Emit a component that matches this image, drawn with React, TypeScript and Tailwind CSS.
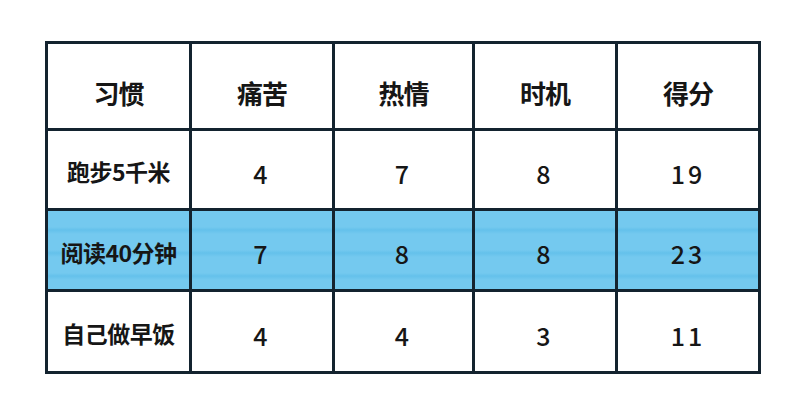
const headers = ['习惯', '痛苦', '热情', '时机', '得分']

const rows: { label: string; values: string[]; highlight?: boolean; height: string }[] = [
  { label: '跑步5千米', values: ['4', '7', '8', '19'], height: 'h-[80px]' },
  { label: '阅读40分钟', values: ['7', '8', '8', '23'], highlight: true, height: 'h-[81px]' },
  { label: '自己做早饭', values: ['4', '4', '3', '11'], height: 'h-[82px]' },
]

const cols = 'grid grid-cols-[144px_143px_140px_143px_143px]'
const cell = 'flex items-center justify-center border-r-[3px] border-b-[3px] border-[#13232f]'

export default function App() {
  return (
    <div className="h-[404px] w-[800px] bg-white pl-[45px] pt-[41px] text-[#161616] [font-family:'Noto_Sans_CJK_SC',sans-serif]">
      <div className="w-[716px] border-l-[3px] border-t-[3px] border-[#13232f]">
        <div className={`${cols} h-[87px]`}>
          {headers.map((h) => (
            <div key={h} className={`${cell} pt-3 text-[26px] font-bold tracking-[-1px]`}>
              {h}
            </div>
          ))}
        </div>
        {rows.map((r) => (
          <div
            key={r.label}
            className={`${cols} ${r.height} ${r.highlight ? 'bg-[repeating-linear-gradient(180deg,#74c9ef_0px,#74c9ef_16px,#64c1eb_19px,#74c9ef_23px)]' : ''}`}
          >
            <div className={`${cell} pt-1 text-[23px] font-bold tracking-[-0.5px]`}>{r.label}</div>
            {r.values.map((v, i) => (
              <div key={i} className={`${cell} pt-2 text-[25px] font-medium tracking-[3px]`}>
                {v}
              </div>
            ))}
          </div>
        ))}
      </div>
    </div>
  )
}
